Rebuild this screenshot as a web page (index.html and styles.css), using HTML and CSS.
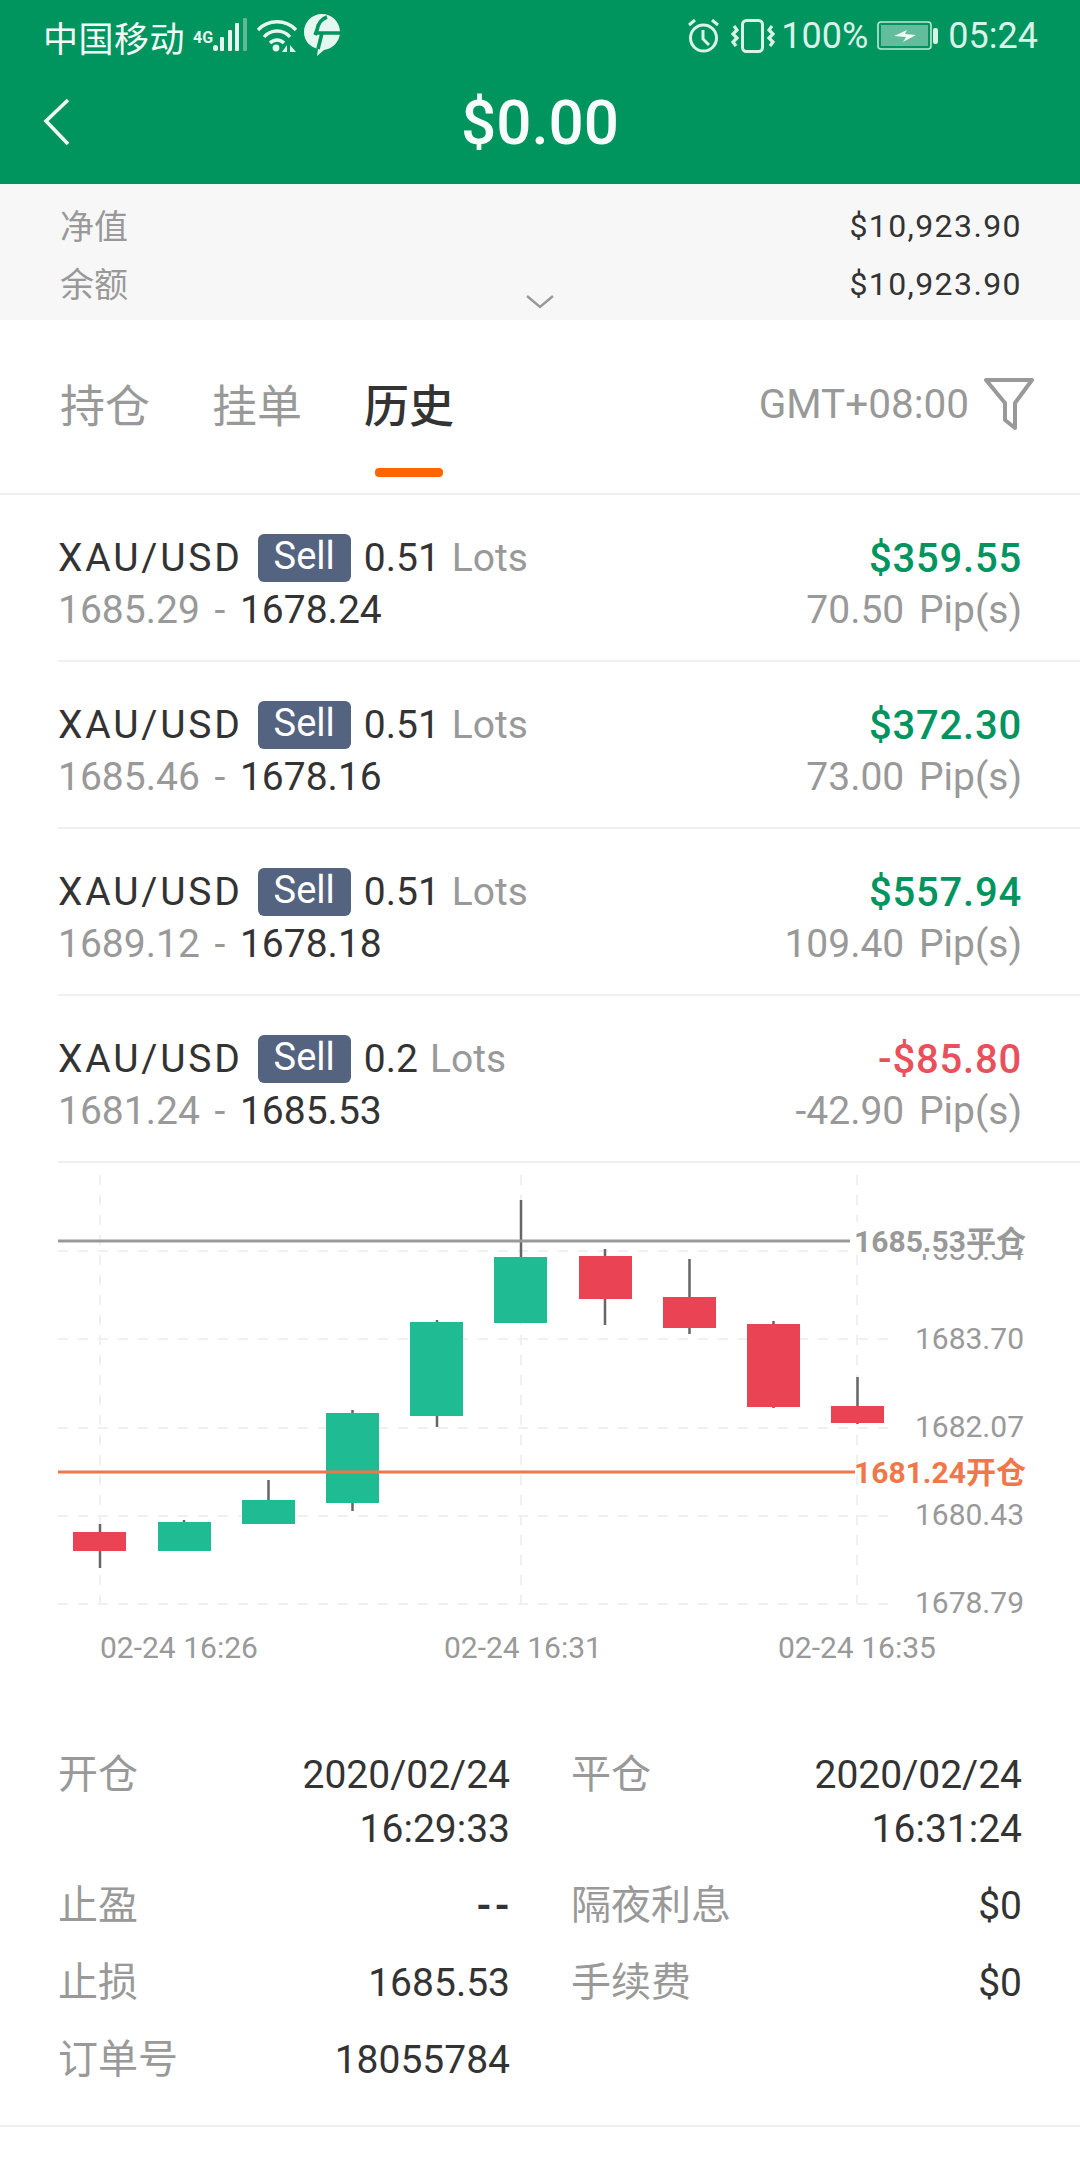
FILE: index.html
```html
<!DOCTYPE html>
<html lang="zh">
<head>
  <meta charset="UTF-8">
  <meta name="viewport" content="width=device-width, initial-scale=1.0">
  <title>Order history</title>
  <link rel="stylesheet" href="styles.css">
</head>
<body>
  <header class="top">
    <div class="status">
      <div class="status-left">
        <span class="carrier">中国移动</span>
        <span class="net">4G</span>
        <svg class="ic-signal" width="36" height="36" viewBox="0 0 36 36">
          <g fill="#e6f6f0">
            <rect x="0" y="27" width="5" height="6" rx="2.5"/>
            <rect x="7" y="19" width="4" height="14" rx="1"/>
            <rect x="15" y="12" width="4" height="21" rx="1"/>
            <rect x="22" y="5" width="4" height="28" rx="1"/>
          </g>
          <rect x="30" y="0" width="4" height="33" rx="1" fill="#5fb896"/>
        </svg>
        <svg class="ic-wifi" width="40" height="34" viewBox="0 0 40 34">
          <g fill="none" stroke="#e6f6f0" stroke-width="3.4">
            <path d="M1 11 C11 0 29 0 39 11"/>
            <path d="M7 18 C14 10 26 10 33 18"/>
            <path d="M13 24 C17 20 23 20 27 24"/>
          </g>
          <circle cx="19" cy="29" r="3.4" fill="#e6f6f0"/>
          <path d="M30 26 V33 H25 Z M33 26 V33 H39 Z" fill="#e6f6f0"/>
        </svg>
        <svg class="ic-leaf" width="36" height="42" viewBox="0 0 36 42">
          <path d="M18 0 C28 0 36 8 36 18 C36 28 28 35 20 36 L13 42 L14 35 C6 33 0 27 0 18 C0 8 8 0 18 0 Z" fill="#e6f6f0"/>
          <path d="M23 3 C17 5 14 10 13 16 L11 21 M13 19 H36 M18 19 L14 35" fill="none" stroke="#00945f" stroke-width="3.6"/>
        </svg>
      </div>
      <div class="status-right">
        <svg class="ic-alarm" width="33" height="34" viewBox="0 0 33 34">
          <circle cx="16.500" cy="19" r="13" fill="none" stroke="#d9f3e9" stroke-width="3"/>
          <path d="M16 11 V20 L22 26 M2 6 L8 1 M31 6 L25 1" fill="none" stroke="#d9f3e9" stroke-width="3"/>
        </svg>
        <svg class="ic-vibrate" width="44" height="34" viewBox="0 0 44 34">
          <rect x="11.500" y="1.500" width="20" height="31" rx="4" fill="none" stroke="#d9f3e9" stroke-width="3"/>
          <path d="M3 7 L6 11 L2 15 L6 19 L2 23 L5 27 M41 7 L38 11 L42 15 L38 19 L42 23 L39 27" fill="none" stroke="#d9f3e9" stroke-width="3.2"/>
        </svg>
        <span class="pct">100%</span>
        <svg class="ic-battery" width="62" height="30" viewBox="0 0 62 30">
          <rect x="1" y="1" width="53" height="27" rx="3" fill="none" stroke="#bfe8d8" stroke-width="1.600"/>
          <rect x="4" y="4" width="47" height="21" fill="#62bd9c"/>
          <path d="M17 15 L30 9 L28 13 L39 14 L26 21 L29 16 Z" fill="#f2fbf7"/>
          <rect x="56" y="7" width="5" height="16" rx="2" fill="#d9f3e9"/>
        </svg>
        <span class="clock">05:24</span>
      </div>
    </div>
    <div class="nav">
      <svg class="back" width="30" height="50" viewBox="0 0 30 50">
        <path d="M26 3 L4 24 L26 47" fill="none" stroke="#f2fbf7" stroke-width="3.600"/>
      </svg>
      <div class="balance">$0.00</div>
    </div>
  </header>

  <section class="summary">
    <div class="summary-row"><span>净值</span><b>$10,923.90</b></div>
    <div class="summary-row"><span>余额</span><b>$10,923.90</b></div>
    <svg class="summary-more" width="30" height="16" viewBox="0 0 30 16">
      <path d="M2 2 L15 13 L28 2" fill="none" stroke="#999" stroke-width="2.400"/>
    </svg>
  </section>

  <nav class="tabs">
    <span class="tab">持仓</span>
    <span class="tab">挂单</span>
    <span class="tab active">历史</span>
    <span class="tz">GMT+08:00</span>
    <svg class="filter" width="52" height="54" viewBox="0 0 52 54">
      <path d="M3 3 H49 L32 26 V51 L22 43 V26 Z" fill="none" stroke="#999" stroke-width="4" stroke-linejoin="round"/>
    </svg>
  </nav>

  <div class="orders">
    <div class="order">
      <div class="order-line">
        <div class="left"><span class="sym">XAU/USD</span><span class="side">Sell</span><span class="lots">0.51</span><span class="muted">Lots</span></div>
        <div class="pnl up">$359.55</div>
      </div>
      <div class="order-line">
        <div class="left"><span class="muted">1685.29 -&nbsp;</span><span>1678.24</span></div>
        <div class="muted">70.50 Pip(s)</div>
      </div>
    </div>
    <div class="order">
      <div class="order-line">
        <div class="left"><span class="sym">XAU/USD</span><span class="side">Sell</span><span class="lots">0.51</span><span class="muted">Lots</span></div>
        <div class="pnl up">$372.30</div>
      </div>
      <div class="order-line">
        <div class="left"><span class="muted">1685.46 -&nbsp;</span><span>1678.16</span></div>
        <div class="muted">73.00 Pip(s)</div>
      </div>
    </div>
    <div class="order">
      <div class="order-line">
        <div class="left"><span class="sym">XAU/USD</span><span class="side">Sell</span><span class="lots">0.51</span><span class="muted">Lots</span></div>
        <div class="pnl up">$557.94</div>
      </div>
      <div class="order-line">
        <div class="left"><span class="muted">1689.12 -&nbsp;</span><span>1678.18</span></div>
        <div class="muted">109.40 Pip(s)</div>
      </div>
    </div>
    <div class="order">
      <div class="order-line">
        <div class="left"><span class="sym">XAU/USD</span><span class="side">Sell</span><span class="lots">0.2</span><span class="muted">Lots</span></div>
        <div class="pnl down">-$85.80</div>
      </div>
      <div class="order-line">
        <div class="left"><span class="muted">1681.24 -&nbsp;</span><span>1685.53</span></div>
        <div class="muted">-42.90 Pip(s)</div>
      </div>
    </div>
  </div>

  <div class="chart-wrap">
    <svg class="chart" width="1080" height="530" viewBox="0 1163 1080 530">
      <g class="grid">
        <path d="M58 1251 H898 M58 1339 H898 M58 1428 H898 M58 1516 H898 M58 1604 H898"/>
        <path d="M100 1175 V1604 M521 1175 V1604 M857 1175 V1604"/>
      </g>

      <g class="wick">
        <path d="M100 1524 V1568 M184 1520 V1530 M268.500 1480 V1510 M352.500 1410 V1511 M437 1320 V1427"/>
        <path d="M521 1200 V1270 M605 1249 V1325 M689.500 1259 V1334 M773.500 1321 V1408 M857.500 1377 V1424"/>
      </g>
      <g class="bull">
        <rect x="158" y="1522" width="53" height="29"/>
        <rect x="242" y="1500" width="53" height="24"/>
        <rect x="326" y="1413" width="53" height="90"/>
        <rect x="410" y="1322" width="53" height="94"/>
        <rect x="494" y="1257" width="53" height="66"/>
      </g>
      <g class="bear">
        <rect x="73" y="1532" width="53" height="19"/>
        <rect x="579" y="1256" width="53" height="43"/>
        <rect x="663" y="1297" width="53" height="31"/>
        <rect x="747" y="1324" width="53" height="83"/>
        <rect x="831" y="1406" width="53" height="17"/>
      </g>

      <path class="close-line" d="M58 1241 H855"/>
      <path class="open-line" d="M58 1472 H855"/>

      <g class="axis-y">
        <text x="1024" y="1260">1685.34</text>
        <rect class="mask" x="850" y="1222" width="185" height="32"/>
        <text x="1024" y="1349">1683.70</text>
        <text x="1024" y="1437">1682.07</text>
        <text x="1024" y="1525">1680.43</text>
        <text x="1024" y="1613">1678.79</text>
      </g>
      <text class="tag tag-close" x="1026" y="1252">1685.53平仓</text>
      <text class="tag tag-open" x="1026" y="1483">1681.24开仓</text>

      <g class="axis-x">
        <text x="100" y="1658">02-24 16:26</text>
        <text x="444" y="1658">02-24 16:31</text>
        <text x="778" y="1658">02-24 16:35</text>
      </g>
    </svg>
  </div>

  <section class="details">
    <div class="cell"><span class="k">开仓</span><span class="v">2020/02/24<br>16:29:33</span></div>
    <div class="cell"><span class="k">平仓</span><span class="v">2020/02/24<br>16:31:24</span></div>
    <div class="cell"><span class="k">止盈</span><span class="v dash">--</span></div>
    <div class="cell"><span class="k">隔夜利息</span><span class="v">$0</span></div>
    <div class="cell"><span class="k">止损</span><span class="v">1685.53</span></div>
    <div class="cell"><span class="k">手续费</span><span class="v">$0</span></div>
    <div class="cell"><span class="k">订单号</span><span class="v">18055784</span></div>
  </section>
</body>
</html>
```

FILE: styles.css
```css
* {
  box-sizing: border-box;
}
body {
  margin: 0;
  width: 1080px;
  height: 2160px;
  overflow: hidden;
  background-color: #fff;
  color: #333;
  font-family: Roboto, "Noto Sans CJK SC", sans-serif;
}

/* green header */
.top {
  height: 184px;
  background-color: #00945f;
}
.status {
  display: flex;
  align-items: center;
  justify-content: space-between;
  height: 72px;
  padding: 0 42px 0 43px;
}
.status-left, .status-right {
  display: flex;
  align-items: center;
}
.carrier {
  font-size: 35px;
  letter-spacing: 0.500px;
  color: #f2fbf7;
  font-family: "Noto Sans CJK SC", sans-serif;
}
.net {
  align-self: flex-start;
  margin: 17px 0 0 8px;
  font-size: 16px;
  font-weight: 700;
  color: #e6f6f0;
}
.ic-wifi {
  margin-left: 8px;
}
.ic-leaf {
  margin: -2px 0 0 7px;
}
.ic-vibrate {
  margin-left: 11px;
}
.pct, .clock {
  font-size: 36px;
  color: #d9f3e9;
}
.pct {
  margin-left: 6px;
}
.ic-battery {
  margin-left: 9px;
}
.clock {
  margin-left: 9px;
}
.nav {
  display: grid;
  grid-template-columns: 1fr auto 1fr;
  align-items: center;
  height: 100px;
}
.back {
  margin-left: 42px;
}
.balance {
  font-size: 62px;
  font-weight: 500;
  color: #f7fdfa;
}

/* account summary */
.summary {
  position: relative;
  height: 136px;
  padding: 13px 58px 0 60px;
  background-color: #f7f7f7;
}
.summary-row {
  display: flex;
  justify-content: space-between;
  align-items: center;
  height: 58px;
  font-size: 34px;
  color: #999;
}
.summary-row span {
  margin-top: -3px;
}
.summary-row b {
  font-size: 32px;
  font-weight: 400;
  letter-spacing: 1.400px;
  color: #333;
}
.summary-more {
  position: absolute;
  left: 525px;
  top: 110px;
}

/* tabs */
.tabs {
  display: flex;
  align-items: center;
  gap: 62px;
  height: 175px;
  padding: 0 45px 6px 60px;
  border-bottom: 2px solid #f0f0f0;
}
.tab {
  position: relative;
  font-size: 45px;
  color: #999;
}
.tab.active {
  color: #333;
  font-weight: 500;
}
.tab.active::after {
  content: "";
  position: absolute;
  left: 11px;
  right: 11px;
  top: 97px;
  height: 9px;
  border-radius: 4px;
  background-color: #ff6600;
}
.tz {
  margin-left: auto;
  font-size: 40.500px;
  color: #999;
}
.filter {
  margin-left: -48px;
}

/* order rows */
.order {
  display: flex;
  flex-direction: column;
  gap: 6px;
  height: 167px;
  margin-left: 58px;
  padding: 40px 58px 0 0;
  border-bottom: 2px solid #f0f0f0;
  font-size: 39px;
}
.order-line {
  display: flex;
  justify-content: space-between;
  align-items: center;
  height: 46px;
}
.left {
  display: flex;
  align-items: center;
}
.sym {
  letter-spacing: 2.800px;
}
.side {
  margin: 0 13px 0 15px;
  padding: 0 16px;
  height: 48px;
  line-height: 44px;
  border-radius: 6px;
  background-color: #54637f;
  color: #fff;
  font-size: 38px;
}
.lots {
  margin-right: 12px;
}
.muted {
  color: #999;
  word-spacing: 5px;
}
.pnl {
  font-size: 40px;
  font-weight: 500;
  letter-spacing: 0.800px;
}
.up {
  color: #00945f;
}
.down {
  color: #e8505b;
}

/* chart */
.chart {
  display: block;
}
.grid path {
  fill: none;
  stroke: #f0f0f0;
  stroke-width: 2;
  stroke-dasharray: 10 10;
}
.wick path {
  fill: none;
  stroke: #666;
  stroke-width: 2.500;
}
.bull rect {
  fill: #1fbb92;
}
.bear rect {
  fill: #ea4354;
}
.close-line {
  stroke: #999;
  stroke-width: 3;
}
.open-line {
  stroke: #f0774a;
  stroke-width: 3;
}
.mask {
  fill: #fff;
}
.axis-y text {
  font-size: 30px;
  fill: #999;
  text-anchor: end;
}
.axis-x text {
  font-size: 30px;
  fill: #999;
}
.tag {
  font-size: 30px;
  font-weight: 700;
  text-anchor: end;
}
.tag-close {
  fill: #999;
}
.tag-open {
  fill: #f0774a;
}

/* order details */
.details {
  display: grid;
  grid-template-columns: 452px 451px;
  align-content: start;
  column-gap: 61px;
  row-gap: 23px;
  height: 434px;
  padding: 55px 0 0 58px;
  border-bottom: 2px solid #f0f0f0;
}
.cell {
  display: flex;
  justify-content: space-between;
  font-size: 39px;
  line-height: 54px;
}
.k {
  color: #999;
  font-size: 40px;
}
.v {
  text-align: right;
}
.dash {
  font-weight: 700;
  letter-spacing: 3px;
  margin-right: -3px;
}
```
